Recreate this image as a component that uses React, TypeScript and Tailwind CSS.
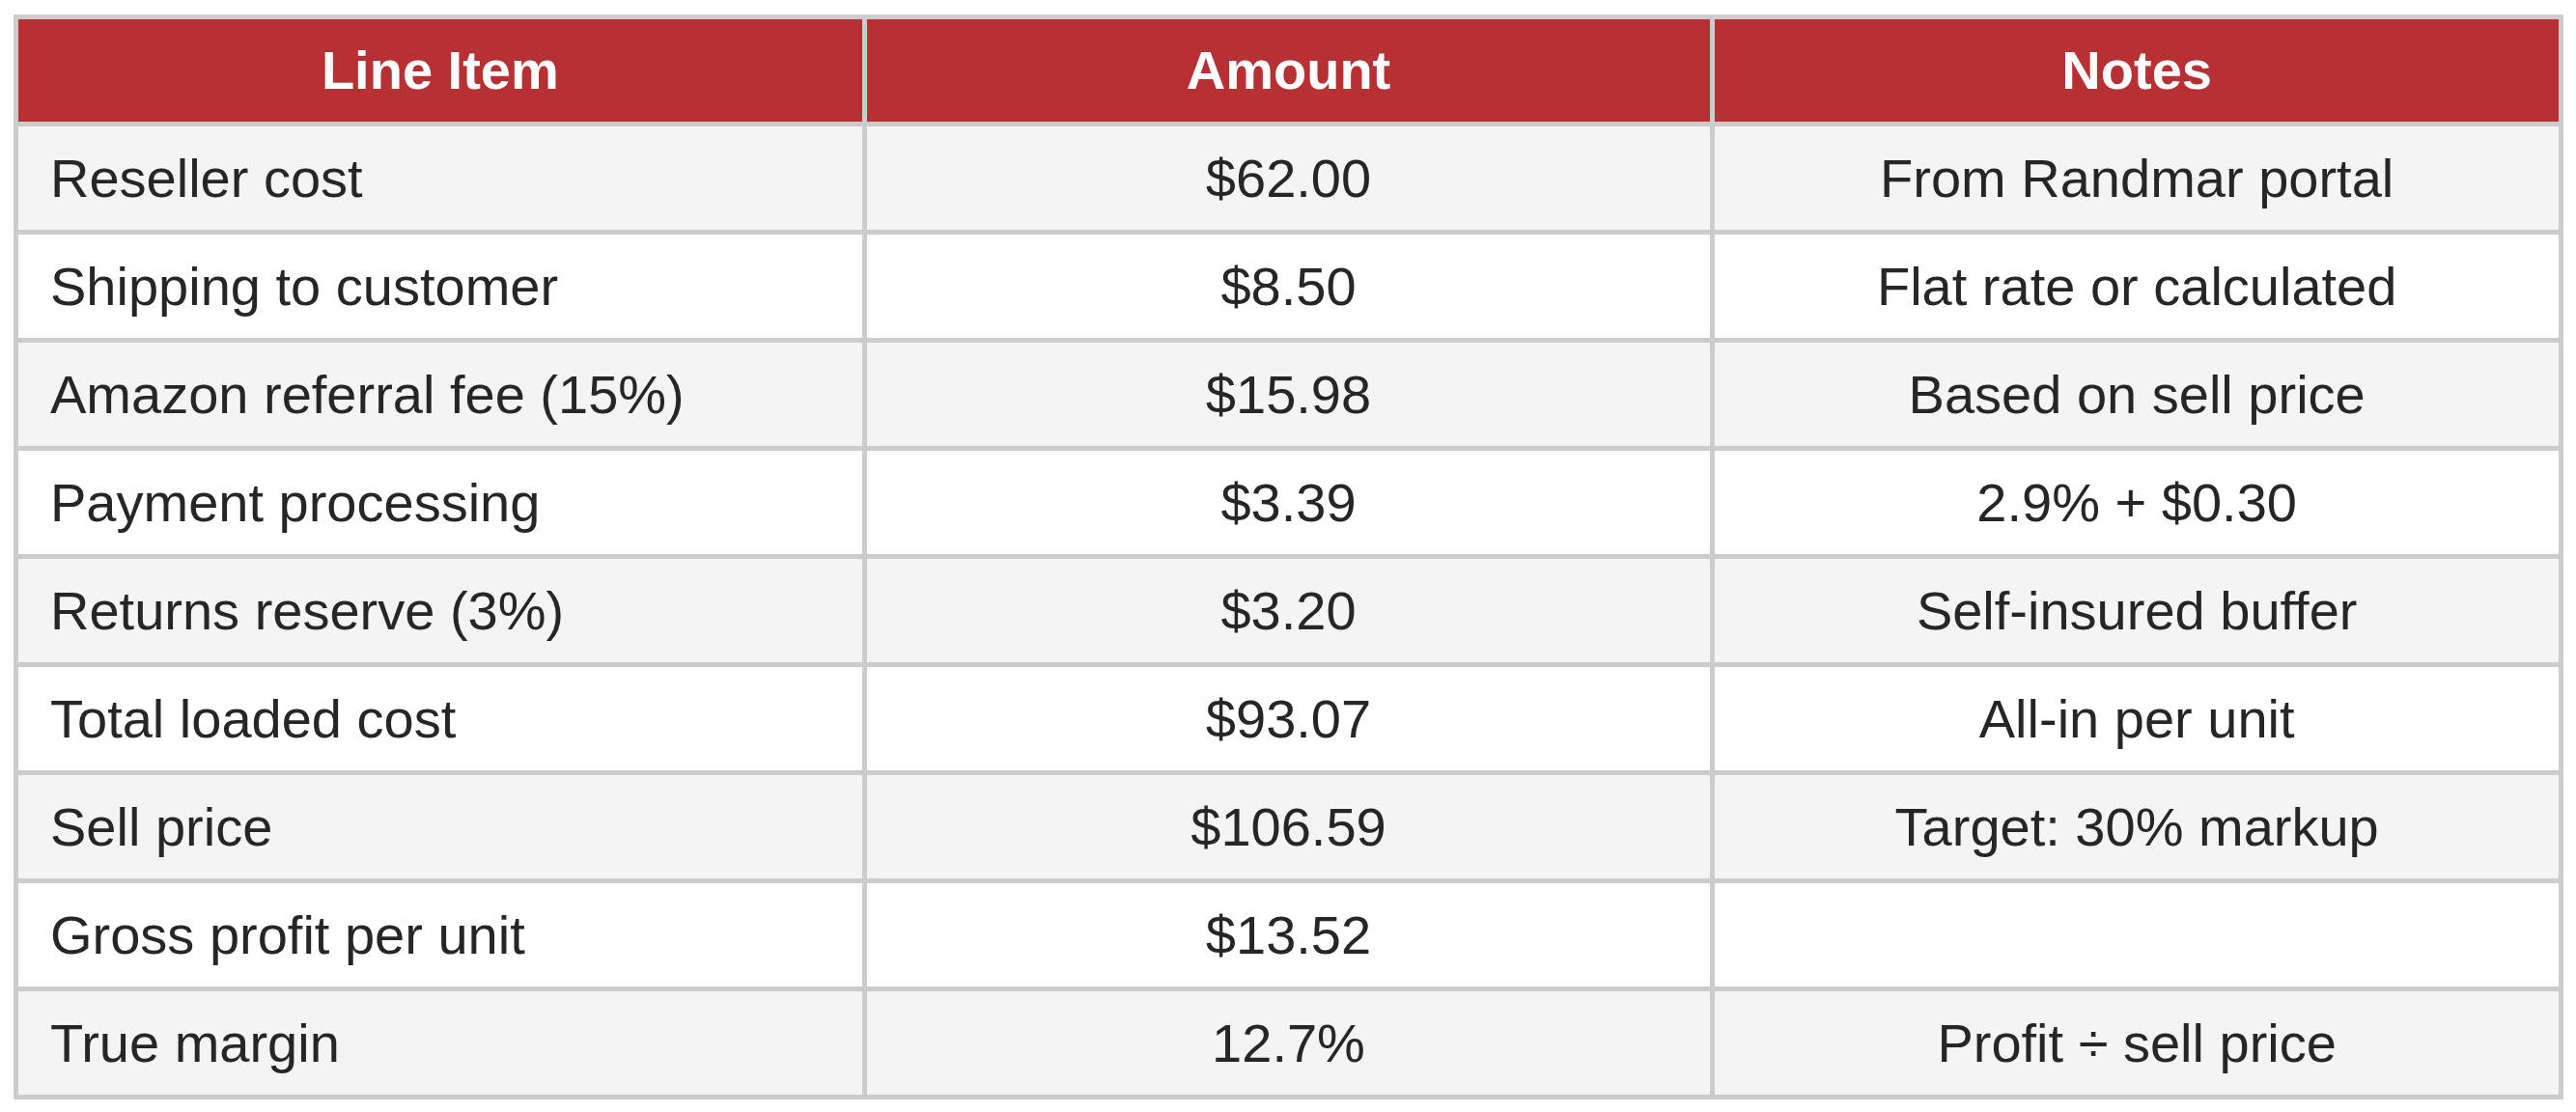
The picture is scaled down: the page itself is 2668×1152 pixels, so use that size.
import React from 'react';

const rows = [
  { item: 'Reseller cost', amount: '$62.00', notes: 'From Randmar portal' },
  { item: 'Shipping to customer', amount: '$8.50', notes: 'Flat rate or calculated' },
  { item: 'Amazon referral fee (15%)', amount: '$15.98', notes: 'Based on sell price' },
  { item: 'Payment processing', amount: '$3.39', notes: '2.9% + $0.30' },
  { item: 'Returns reserve (3%)', amount: '$3.20', notes: 'Self-insured buffer' },
  { item: 'Total loaded cost', amount: '$93.07', notes: 'All-in per unit' },
  { item: 'Sell price', amount: '$106.59', notes: 'Target: 30% markup' },
  { item: 'Gross profit per unit', amount: '$13.52', notes: '' },
  { item: 'True margin', amount: '12.7%', notes: 'Profit ÷ sell price' },
];

const App = () => {
  return (
    <div className="min-h-screen bg-white pl-[14px] pt-[15px] font-['Liberation_Sans',Arial,sans-serif]">
      <div className="grid w-[2641px] grid-cols-3 gap-[5px] bg-[#cccccc] p-[5px] text-[56px] leading-none text-[#262626]">
        <div className="flex h-[106px] items-center justify-center bg-[#b73033] font-bold text-white">Line Item</div>
        <div className="flex h-[106px] items-center justify-center bg-[#b73033] font-bold text-white">Amount</div>
        <div className="flex h-[106px] items-center justify-center bg-[#b73033] font-bold text-white">Notes</div>
        {rows.map((row, i) => {
          const bg = i % 2 === 0 ? 'bg-[#f4f4f4]' : 'bg-white';
          return (
            <React.Fragment key={row.item}>
              <div className={`flex h-[107px] items-center pl-[33px] ${bg}`}>{row.item}</div>
              <div className={`flex h-[107px] items-center justify-center ${bg}`}>{row.amount}</div>
              <div className={`flex h-[107px] items-center justify-center ${bg}`}>{row.notes}</div>
            </React.Fragment>
          );
        })}
      </div>
    </div>
  );
};

export default App;
